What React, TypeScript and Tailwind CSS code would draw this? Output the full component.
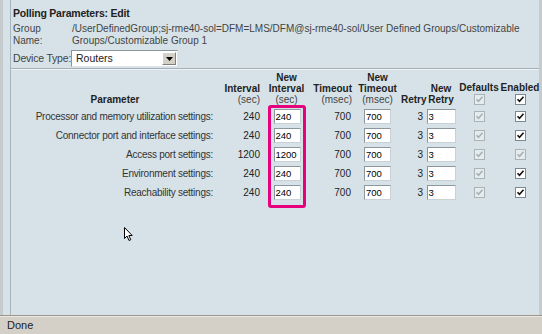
import React from 'react'

type Row = {
  label: string
  interval: string
  timeout: string
  retry: string
  enabledOff?: boolean
}

const rows: Row[] = [
  { label: 'Processor and memory utilization settings:', interval: '240', timeout: '700', retry: '3' },
  { label: 'Connector port and interface settings:', interval: '240', timeout: '700', retry: '3' },
  { label: 'Access port settings:', interval: '1200', timeout: '700', retry: '3', enabledOff: true },
  { label: 'Environment settings:', interval: '240', timeout: '700', retry: '3' },
  { label: 'Reachability settings:', interval: '240', timeout: '700', retry: '3' },
]

const grid = 'grid grid-cols-[206px_45px_49px_42px_47px_24px_32px_44px_38px]'

function Check({ disabled }: { disabled?: boolean }) {
  return (
    <div
      className={
        'w-[11px] h-[11px] border flex items-center justify-center ' +
        (disabled ? 'border-[#a9b3b8] bg-[#e6ebee]' : 'border-[#7a8a94] bg-white')
      }
    >
      <svg width="9" height="9" viewBox="0 0 9 9">
        <path
          d="M1.5 4.2 L3.5 6.3 L7.5 1.8"
          fill="none"
          stroke={disabled ? '#a7b0b5' : '#111'}
          strokeWidth="1.6"
        />
      </svg>
    </div>
  )
}

function Field({ value, w }: { value: string; w: string }) {
  return (
    <div
      className={
        w +
        ' h-[15px] bg-white border border-t-[#8c979d] border-l-[#8c979d] border-r-[#c9d1d6] border-b-[#c9d1d6] pl-[1px] text-[9.5px] leading-[13px] text-black'
      }
    >
      {value}
    </div>
  )
}

export default function App() {
  return (
    <div
      className="relative w-[542px] h-[334px] overflow-hidden bg-[#d6e2e8] text-[#333] text-[10px] flex flex-col"
      style={{ fontFamily: '"Liberation Sans", Arial, sans-serif' }}
    >
      <div className="flex flex-1 min-h-0">
        {/* left frame strip */}
        <div className="w-[3px] bg-[#c6cbce]" />
        <div className="w-[7px]" />
        <div className="w-[1px] bg-[#a8b4bb]" />
        <div className="flex-1 flex flex-col">
          {/* top form */}
          <div className="pl-[2px] pt-[7px] h-[68px]">
            <div className="font-bold text-[10.5px] leading-[12px] text-[#222] tracking-[-0.2px]">
              Polling Parameters: Edit
            </div>
            <div className="flex mt-[4px] leading-[12px] text-[#444]">
              <div className="w-[59px] shrink-0">
                Group
                <br />
                Name:
              </div>
              <div className="whitespace-nowrap">
                /UserDefinedGroup;sj-rme40-sol=DFM=LMS/DFM@sj-rme40-sol/User Defined Groups/Customizable
                <br />
                Groups/Customizable Group 1
              </div>
            </div>
            <div className="flex items-center mt-[3px] text-[#444]">
              <div className="w-[58px] shrink-0 whitespace-nowrap text-[10.5px] tracking-[-0.2px]">Device Type:</div>
              <div className="w-[107px] shrink-0 h-[17px] bg-white border border-t-[#8c979d] border-l-[#8c979d] border-r-[#dde3e6] border-b-[#dde3e6] flex items-center justify-between pl-[4px] pr-[1px]">
                <span className="text-[10.5px] text-[#222]">Routers</span>
                <div className="w-[14px] h-[13px] bg-[#d4d0c8] border border-t-white border-l-white border-r-[#808080] border-b-[#808080] flex items-center justify-center">
                  <svg width="7" height="4" viewBox="0 0 7 4">
                    <path d="M0 0 H7 L3.5 4 Z" fill="#000" />
                  </svg>
                </div>
              </div>
            </div>
          </div>
          <div className="h-[1px] bg-[#a6b0b6]" />
          <div className="h-[1px] bg-[#eef3f6]" />

          {/* table header */}
          <div className={grid + ' pl-[1px] pt-[2px] items-end leading-[11px] text-[#222]'}>
            <div className="text-center font-bold">Parameter</div>
            <div className="text-right pr-[3px]">
              <div className="font-bold">Interval</div>
              <div className="text-[#444]">(sec)</div>
            </div>
            <div className="text-center pr-[2px]">
              <div className="font-bold">New</div>
              <div className="font-bold">Interval</div>
              <div className="text-[#444]">(sec)</div>
            </div>
            <div className="text-right pr-[2px]">
              <div className="font-bold">Timeout</div>
              <div className="text-[#444]">(msec)</div>
            </div>
            <div className="text-center">
              <div className="font-bold">New</div>
              <div className="font-bold">Timeout</div>
              <div className="text-[#444]">(msec)</div>
            </div>
            <div className="text-right font-bold">Retry</div>
            <div className="text-center font-bold">
              <div>New</div>
              <div>Retry</div>
            </div>
            <div className="flex flex-col items-center font-bold">
              <div>Defaults</div>
              <div className="h-[12px] flex items-center">
                <Check disabled />
              </div>
            </div>
            <div className="flex flex-col items-center font-bold">
              <div>Enabled</div>
              <div className="h-[12px] flex items-center">
                <Check />
              </div>
            </div>
          </div>

          {/* table rows */}
          <div className="mt-[2px] pl-[1px]">
            {rows.map((r) => (
              <div key={r.label} className={grid + ' h-[19px] items-center text-[#333] text-[10px]'}>
                <div className="text-right pr-[5px] whitespace-nowrap tracking-[-0.25px]">{r.label}</div>
                <div className="text-right pr-[3px] text-[#222]">{r.interval}</div>
                <div className="flex justify-center pr-[1px]">
                  <Field value={r.interval} w="w-[27px]" />
                </div>
                <div className="text-right pr-[3px] text-[#222]">{r.timeout}</div>
                <div className="flex justify-center">
                  <Field value={r.timeout} w="w-[27px]" />
                </div>
                <div className="text-right pr-[2px] text-[#222]">{r.retry}</div>
                <div className="flex justify-center">
                  <Field value={r.retry} w="w-[29px]" />
                </div>
                <div className="flex justify-center">
                  <Check disabled />
                </div>
                <div className="flex justify-center">
                  <Check disabled={r.enabledOff} />
                </div>
              </div>
            ))}
          </div>
        </div>
        <div className="w-[3px] bg-[#c6cbce]" />
      </div>

      {/* status bar */}
      <div className="h-[1px] bg-[#9a968e]" />
      <div className="h-[1px] bg-[#ece9e2]" />
      <div className="h-[17px] bg-[#d4d0c8] flex items-center pl-[7px] text-[11px] text-[#222]">
        Done
      </div>

      {/* highlight annotation */}
      <div className="absolute left-[268px] top-[105px] w-[38px] h-[103px] border-[3px] border-[#e6007e] rounded-[3px]" />

      {/* mouse pointer */}
      <svg className="absolute left-[124px] top-[227px]" width="10" height="15" viewBox="0 0 10 15">
        <path d="M0.5 0.5 V11.5 L3 9 L5 13.5 L6.8 12.7 L4.8 8.5 H8.2 Z" fill="#fff" stroke="#000" strokeWidth="1" />
      </svg>
    </div>
  )
}
